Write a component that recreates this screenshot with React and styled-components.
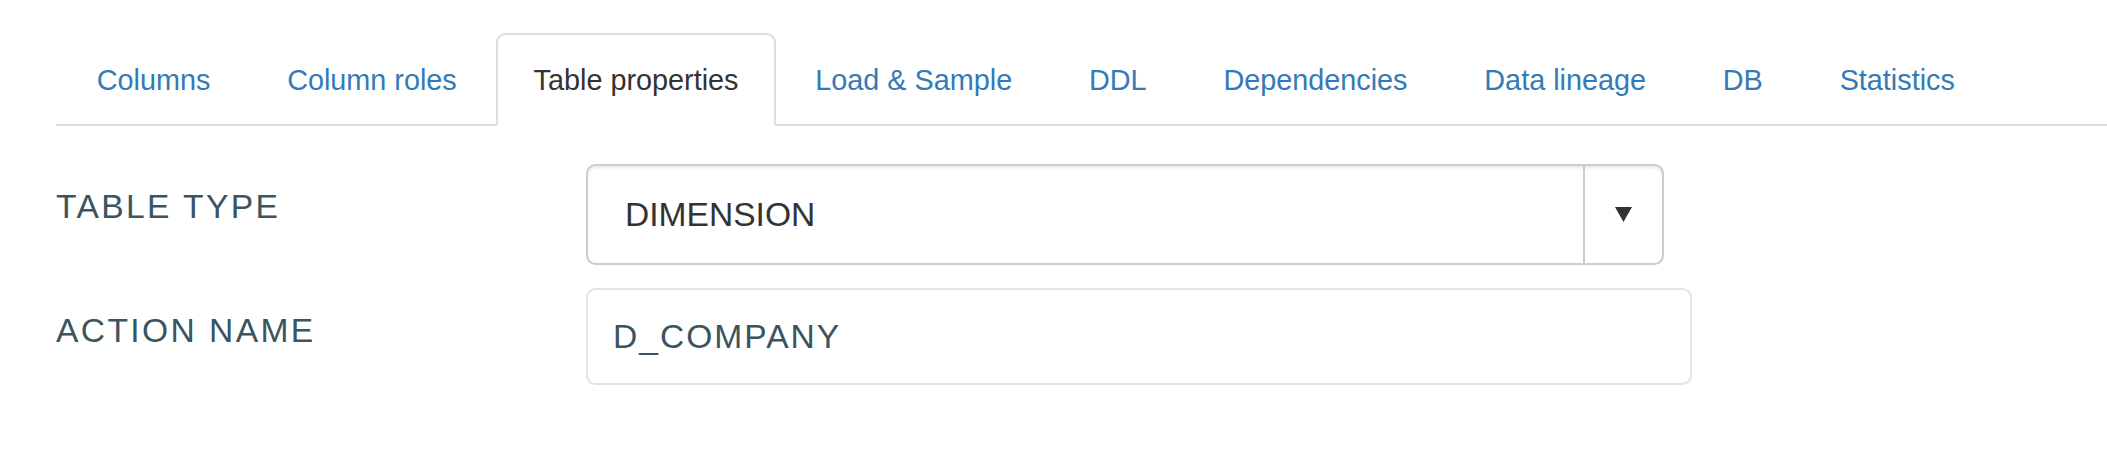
import React from 'react'
import styled, { createGlobalStyle } from 'styled-components';

const tabs = [
  'Columns',
  'Column roles',
  'Table properties',
  'Load & Sample',
  'DDL',
  'Dependencies',
  'Data lineage',
  'DB',
  'Statistics',
];

const App = () => {
  return (
    <Page>
      <GlobalStyle />
      <TabList>
        {tabs.map((tab) => (
          <TabItem key={tab}>
            <TabLink href="#" active={tab === 'Table properties' ? 1 : 0}>
              {tab}
            </TabLink>
          </TabItem>
        ))}
      </TabList>
      <Form>
        <Row>
          <Label>Table type</Label>
          <Select>
            <SelectValue>DIMENSION</SelectValue>
            <SelectArrow>
              <svg width="17" height="15" viewBox="0 0 17 15">
                <polygon points="0,0 17,0 8.5,15" fill="#333" />
              </svg>
            </SelectArrow>
          </Select>
        </Row>
        <Row>
          <Label>Action name</Label>
          <Input>D_COMPANY</Input>
        </Row>
      </Form>
    </Page>
  );
}

export default App

const GlobalStyle = createGlobalStyle`
  body {
    margin: 0;
    background: #fff;
    font-family: "Liberation Sans", Arial, sans-serif;
  }
`;

const Page = styled.div`
  padding: 33px 0 0 56px;
`;

const TabList = styled.ul`
  display: flex;
  margin: 0;
  padding: 0 0 0 2.7px;
  list-style: none;
  border-bottom: 2.4px solid #ddd;
`;

const TabItem = styled.li`
  margin-bottom: -2.4px;
  margin-right: 0.8px;
`;

const TabLink = styled.a`
  display: block;
  padding: 25px 36px 23px;
  font-size: 28.8px;
  line-height: 1.42857;
  text-decoration: none;
  border: 2.4px solid transparent;
  border-radius: 9.6px 9.6px 0 0;
  color: ${props => props.active ? '#333' : '#337ab7'};
  background: ${props => props.active ? '#fff' : 'transparent'};
  border-color: ${props => props.active ? '#ddd #ddd transparent' : 'transparent'};
`;

const Form = styled.div`
  display: flex;
  flex-direction: column;
  gap: 23px;
  padding-top: 38px;
`;

const Row = styled.div`
  display: grid;
  grid-template-columns: 530px auto;
  justify-content: start;
`;

const Label = styled.div`
  padding-top: 19px;
  font-size: 33.6px;
  line-height: 1.42857;
  letter-spacing: 2.4px;
  text-transform: uppercase;
  color: #3a5460;
`;

const Select = styled.div`
  display: flex;
  box-sizing: border-box;
  width: 1078px;
  height: 101px;
  border: 2px solid #ccc;
  border-radius: 9.6px;
  box-shadow: inset 0 2.4px 2.4px rgba(0, 0, 0, 0.075);
  overflow: hidden;
`;

const SelectValue = styled.div`
  flex: 1;
  display: flex;
  align-items: center;
  padding: 2px 0 0 37px;
  font-size: 33.6px;
  color: #333;
`;

const SelectArrow = styled.div`
  display: flex;
  align-items: center;
  justify-content: center;
  width: 77px;
  border-left: 2px solid #ccc;
`;

const Input = styled.div`
  display: flex;
  align-items: center;
  box-sizing: border-box;
  width: 1106px;
  height: 97px;
  padding: 2px 0 0 25px;
  border: 2px solid #e3e3e3;
  border-radius: 9.6px;
  font-size: 33.6px;
  letter-spacing: 2px;
  color: #3a5460;
`;
